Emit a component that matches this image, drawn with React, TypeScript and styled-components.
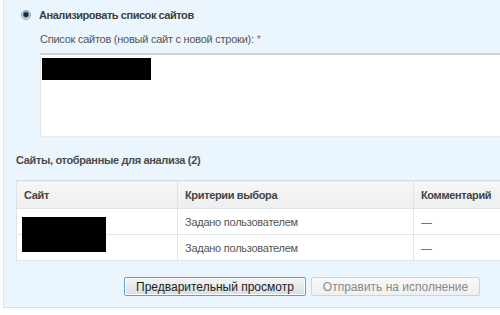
import React from 'react';
import styled, { createGlobalStyle } from 'styled-components';

const GlobalStyle = createGlobalStyle`
  html, body {
    margin: 0;
    padding: 0;
    background: #ffffff;
    overflow: hidden;
  }
  body {
    font-family: 'Liberation Sans', Arial, sans-serif;
    font-size: 11px;
    letter-spacing: -0.25px;
    color: #4a4a4a;
  }
`;

const Panel = styled.div`
  margin-left: 3px;
  width: 497px;
  height: 308px;
  box-sizing: border-box;
  background: #ebf5fd;
  border-left: 1px solid #d9e4ee;
  border-bottom: 1px solid #d3dee8;
  padding-top: 7px;
  overflow: hidden;
`;

const RadioRow = styled.label`
  display: flex;
  align-items: center;
  gap: 8px;
  padding-left: 17px;
  height: 15px;
  font-weight: bold;
  letter-spacing: -0.45px;
  color: #3f3f3f;
`;

const Radio = styled.span`
  width: 10px;
  height: 10px;
  border-radius: 50%;
  box-sizing: border-box;
  background: radial-gradient(circle at 50% 45%, #132f48 0 1.8px, #3d6a8e 2.6px, #c3d0db 3.4px, #e9eef3 4.5px);
  border: 1px solid #8ea2b4;
`;

const FieldLabel = styled.div`
  margin: 10px 0 0 36px;
  height: 14px;
  line-height: 14px;
  color: #555555;
`;

const Required = styled.span`
  color: #c8614a;
  margin-left: 3px;
`;

const TextArea = styled.div`
  margin: 7px 0 0 36px;
  height: 84px;
  box-sizing: border-box;
  background: #ffffff;
  border-top: 2px solid #ccd3d9;
  border-left: 1px solid #e2e7eb;
  border-bottom: 1px solid #e6edf3;
  padding: 3px 0 0 1px;
`;

const Redacted = styled.div<{ $w: number; $h: number }>`
  width: ${(p) => p.$w}px;
  height: ${(p) => p.$h}px;
  background: #000000;
`;

const SectionTitle = styled.div`
  margin: 16px 0 0 12px;
  height: 14px;
  line-height: 14px;
  font-weight: bold;
  letter-spacing: -0.35px;
  color: #4a4a4a;
`;

const Table = styled.table`
  margin: 13px 0 0 12px;
  border-collapse: collapse;
  width: 560px;
  table-layout: fixed;
  background: #ffffff;
`;

const HeadCell = styled.th<{ $w?: number }>`
  width: ${(p) => (p.$w ? `${p.$w}px` : 'auto')};
  height: 28px;
  box-sizing: border-box;
  padding: 0 7px;
  text-align: left;
  font-weight: bold;
  letter-spacing: -0.35px;
  color: #444444;
  background: linear-gradient(#f5f6f7, #eceef0);
  border: 1px solid #dde2e6;
  border-top-color: #d3dbe2;
`;

const Cell = styled.td`
  height: 26px;
  box-sizing: border-box;
  padding: 0 7px;
  color: #555555;
  border: 1px solid #e1e5e8;
`;

const SiteCell = styled(Cell)`
  padding: 0 0 0 5px;
  vertical-align: top;
`;

const SiteMask = styled.div`
  position: relative;
`;

const SiteRedacted = styled(Redacted)`
  position: absolute;
  top: 8px;
`;

const Actions = styled.div`
  display: flex;
  gap: 5px;
  margin: 16px 0 0 120px;
`;

const Button = styled.button<{ $primary?: boolean }>`
  height: 19px;
  padding: 0 11px;
  font-family: 'Liberation Sans', Arial, sans-serif;
  font-size: 12px;
  letter-spacing: 0;
  line-height: 16px;
  border-radius: 2px;
  box-sizing: border-box;
  color: ${(p) => (p.$primary ? '#222222' : '#8a8a8a')};
  background: ${(p) =>
    p.$primary ? 'linear-gradient(#f4f5f6, #d9dde1)' : 'linear-gradient(#f8f8f8, #efefef)'};
  border: 1px solid ${(p) => (p.$primary ? '#5f9fd3' : '#cfd3d6')};
  box-shadow: ${(p) => (p.$primary ? 'inset 0 0 0 1px #ffffff' : 'none')};
`;

export default function App() {
  return (
    <>
      <GlobalStyle />
      <Panel>
        <RadioRow>
          <Radio />
          Анализировать список сайтов
        </RadioRow>
        <FieldLabel>
          Список сайтов (новый сайт с новой строки):<Required>*</Required>
        </FieldLabel>
        <TextArea>
          <Redacted $w={109} $h={22} />
        </TextArea>
        <SectionTitle>Сайты, отобранные для анализа (2)</SectionTitle>
        <Table>
          <thead>
            <tr>
              <HeadCell $w={161}>Сайт</HeadCell>
              <HeadCell $w={236}>Критерии выбора</HeadCell>
              <HeadCell>Комментарий</HeadCell>
            </tr>
          </thead>
          <tbody>
            <tr>
              <SiteCell>
                <SiteMask>
                  <SiteRedacted $w={84} $h={35} />
                </SiteMask>
              </SiteCell>
              <Cell>Задано пользователем</Cell>
              <Cell>—</Cell>
            </tr>
            <tr>
              <Cell />
              <Cell>Задано пользователем</Cell>
              <Cell>—</Cell>
            </tr>
          </tbody>
        </Table>
        <Actions>
          <Button $primary>Предварительный просмотр</Button>
          <Button disabled>Отправить на исполнение</Button>
        </Actions>
      </Panel>
    </>
  );
}
